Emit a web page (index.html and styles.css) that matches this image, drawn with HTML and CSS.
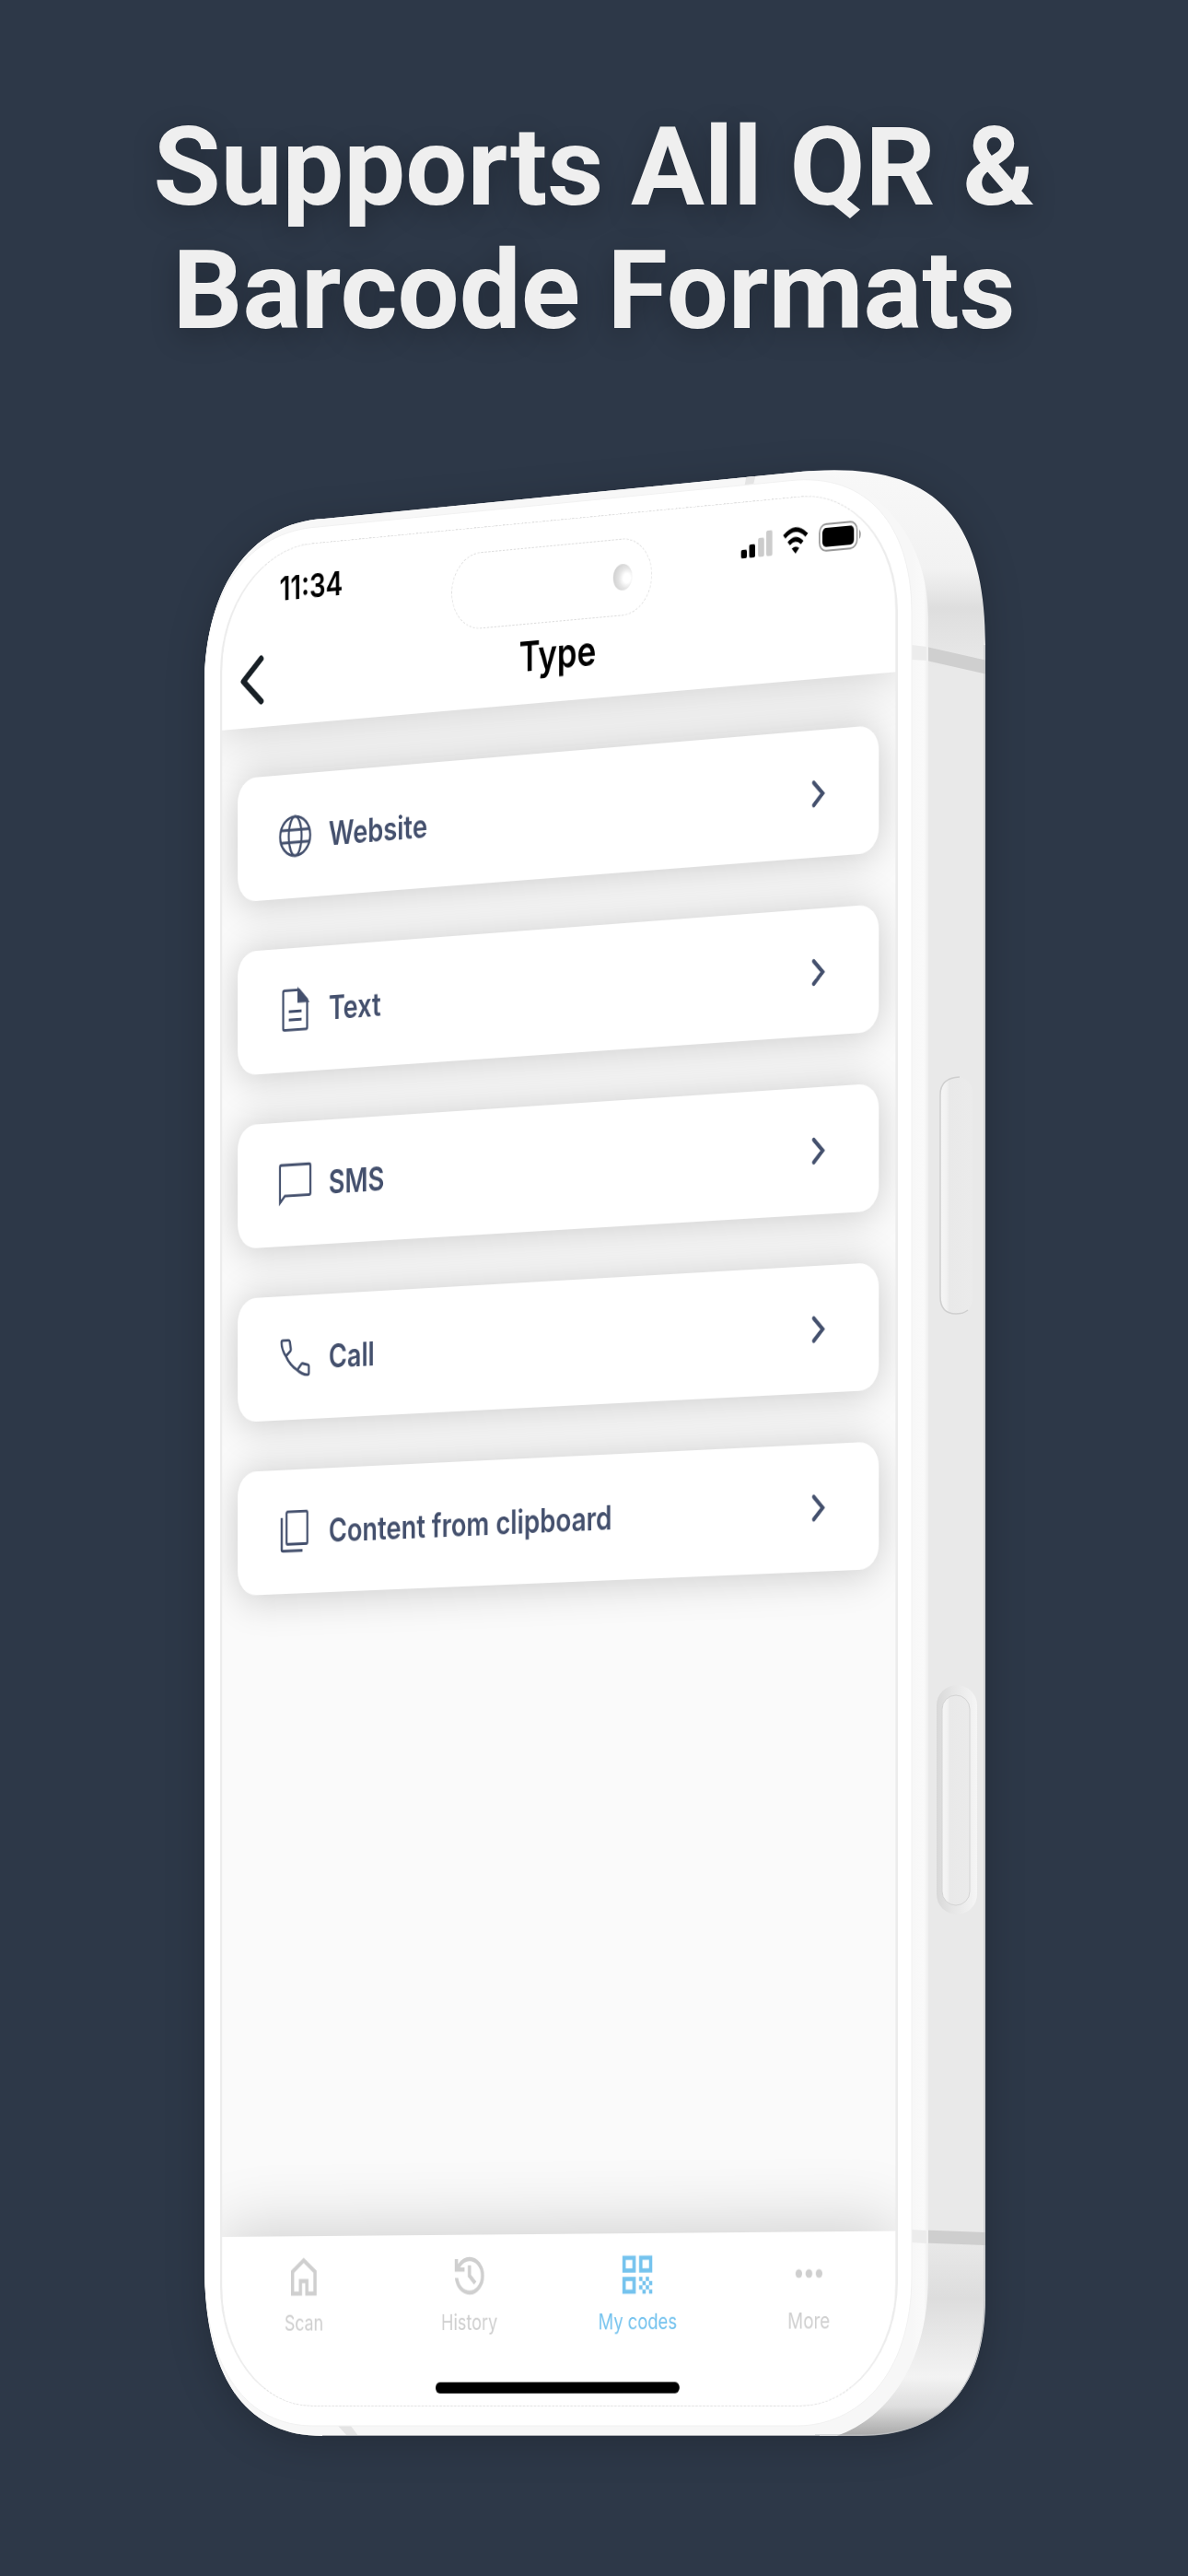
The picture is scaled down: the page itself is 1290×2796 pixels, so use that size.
FILE: index.html
```
<!DOCTYPE html>
<html lang="en">
<head>
    <meta charset="UTF-8">
    <meta name="viewport" content="width=device-width, initial-scale=1.0">
    <title>Supports All QR &amp; Barcode Formats</title>
    <link rel="stylesheet" href="styles.css">
</head>
<body>
    <h1 class="headline">Supports All QR &amp;<br>Barcode Formats</h1>

    <main class="phone">
        <!-- Phone body -->
        <svg class="shell" viewBox="219 510 852 2138" aria-hidden="true">
            <defs>
                <linearGradient id="side" gradientUnits="userSpaceOnUse" x1="0" y1="511" x2="0" y2="2644">
                    <stop offset="0" stop-color="#f8f8f8"/>
                    <stop offset="0.05" stop-color="#f2f2f2"/>
                    <stop offset="0.07" stop-color="#dedede"/>
                    <stop offset="0.1" stop-color="#e9e9e9"/>
                    <stop offset="0.9" stop-color="#e9e9e9"/>
                    <stop offset="0.93" stop-color="#dddddd"/>
                    <stop offset="0.97" stop-color="#f3f3f3"/>
                    <stop offset="0.985" stop-color="#dedede"/>
                    <stop offset="1" stop-color="#a8a8a8"/>
                </linearGradient>
                <linearGradient id="edge" gradientUnits="userSpaceOnUse" x1="990" y1="0" x2="1009" y2="0">
                    <stop offset="0" stop-color="#f7f7f7"/>
                    <stop offset="0.7" stop-color="#fafafa"/>
                    <stop offset="1" stop-color="#ececec"/>
                </linearGradient>
                <linearGradient id="bevel" x1="0" y1="0" x2="1" y2="0">
                    <stop offset="0" stop-color="#d8d8d8"/>
                    <stop offset="0.4" stop-color="#e6e6e6"/>
                    <stop offset="1" stop-color="#f5f5f5"/>
                </linearGradient>
                <linearGradient id="key" x1="0" y1="0" x2="1" y2="0">
                    <stop offset="0" stop-color="#f6f6f6"/>
                    <stop offset="0.2" stop-color="#f1f1f1"/>
                    <stop offset="0.28" stop-color="#e9e9e9"/>
                    <stop offset="1" stop-color="#ebebeb"/>
                </linearGradient>
                <clipPath id="body">
                    <path d="M222 745C222 640 270 567 352 563L860 513C1000 498 1070 545 1070 700V2495C1070 2600 1015 2644 935 2644H350C270 2644 222 2585 222 2460Z"/>
                </clipPath>
            </defs>
            <g clip-path="url(#body)">
                <rect x="220" y="505" width="852" height="2143" fill="url(#side)"/>
                <path d="M990 700L1006 702L1072 717V732L1006 717L990 716Z" fill="#cfcfcf"/>
                <path d="M990 2420L1072 2423V2437L990 2434Z" fill="#cecece"/>
                <path d="M222 745C222 640 270 560 352 555L850 508C960 512 1008 590 1008 670V2470C1008 2580 950 2640 885 2650H350C270 2650 222 2585 222 2460Z" fill="url(#edge)"/>
                <path d="M990 700L1006 702V717L990 716ZM990 2420L1006 2421V2435L990 2434Z" fill="#ececec"/>
                <path d="M811 514H821L817 530H808ZM367 2633H381L389 2644H377Z" fill="#e4e4e4"/>
                <path d="M222 745C222 640 270 577 345 572L865 521C950 516 990 580 990 665V2470C990 2580 930 2633 865 2633H340C270 2633 222 2575 222 2460Z" fill="#fff" stroke="#f1f1f1"/>
                <path d="M885 2643H935C1015 2643 1069 2600 1069 2495V700" fill="none" stroke="#b9bcc0" stroke-width="1"/>
                <path d="M350 2644H890" stroke="#aeb1b5" stroke-width="2"/>
            </g>
            <rect x="1021" y="1169" width="35" height="257" rx="16" fill="url(#key)"/>
            <path d="M1042 1169Q1021 1170 1021 1188V1407Q1021 1426 1038 1426Q1046 1426 1051 1422" fill="none" stroke="#cfcfcf" stroke-width="1.5"/>
            <rect x="1017" y="1829" width="44" height="249" rx="22" fill="url(#bevel)"/>
            <rect x="1023" y="1840" width="30" height="228" rx="15" fill="url(#key)" stroke="#d4d4d4"/>
        </svg>

        <!-- App screen, turned towards the left -->
        <div class="screen">
            <div class="island"><span class="camera"></span></div>
            <header class="top">
                <div class="status">
                    <span class="time">11:34</span>
                    <svg class="signal" viewBox="0 0 42 28" aria-hidden="true">
                        <rect x="0" y="19" width="8" height="9" rx="2"/>
                        <rect x="11" y="14" width="8" height="14" rx="2"/>
                        <rect x="23" y="8" width="8" height="20" rx="2" fill="#ccc"/>
                        <rect x="34" y="1" width="8" height="27" rx="2" fill="#ccc"/>
                    </svg>
                    <svg class="wifi" viewBox="0 0 34 28" aria-hidden="true">
                        <path d="M2 9.5Q17-4 32 9.5M8 17Q17 9 26 17" fill="none" stroke="#000" stroke-width="5"/>
                        <path d="M12 22.5Q17 19 22 22.5L17 28Z"/>
                    </svg>
                    <svg class="battery" viewBox="0 0 58 30" aria-hidden="true">
                        <rect x="1" y="1" width="50" height="28" rx="9" fill="none" stroke="#999" stroke-width="2"/>
                        <rect x="5" y="5" width="42" height="20" rx="5"/>
                        <path d="M54 10Q58 15 54 20Z" fill="#999"/>
                    </svg>
                </div>
                <div class="navbar">
                    <button class="back" type="button" aria-label="Back">
                        <svg viewBox="0 0 36 56" aria-hidden="true"><path d="M31 5L6 28L31 51"/></svg>
                    </button>
                    <h2 class="title">Type</h2>
                </div>
            </header>

            <div class="types">
                <button class="type" type="button">
                    <svg class="icon" viewBox="0 0 24 24" aria-hidden="true">
                        <circle cx="12" cy="12" r="9.4"/><ellipse cx="12" cy="12" rx="4" ry="9.4"/>
                        <path d="M3.3 9H20.7M3.3 15H20.7"/>
                    </svg>
                    <span class="label">Website</span>
                    <svg class="chevron" viewBox="0 0 24 24" aria-hidden="true"><path d="M9.5 6.7L14.8 12L9.5 17.3"/></svg>
                </button>
                <button class="type" type="button">
                    <svg class="icon" viewBox="0 0 24 24" aria-hidden="true">
                        <path d="M5.3 2.5H14.5L19.5 7.5V20.7Q19.5 21.5 18.7 21.5H5.3Q4.5 21.5 4.5 20.7V3.3Q4.5 2.5 5.3 2.5ZM8 12.7H16M8 16.7H16"/>
                        <path d="M14 2.5V8H19.5Z" fill="currentColor"/>
                    </svg>
                    <span class="label">Text</span>
                    <svg class="chevron" viewBox="0 0 24 24" aria-hidden="true"><path d="M9.5 6.7L14.8 12L9.5 17.3"/></svg>
                </button>
                <button class="type" type="button">
                    <svg class="icon" viewBox="0 0 24 24" aria-hidden="true">
                        <path d="M2.5 20.8V3.7Q2.5 2.8 3.4 2.8H20.6Q21.5 2.8 21.5 3.7V16.8Q21.5 17.6 20.6 17.6H5.6Z"/>
                    </svg>
                    <span class="label">SMS</span>
                    <svg class="chevron" viewBox="0 0 24 24" aria-hidden="true"><path d="M9.5 6.7L14.8 12L9.5 17.3"/></svg>
                </button>
                <button class="type" type="button">
                    <svg class="icon" viewBox="0 0 24 24" aria-hidden="true">
                        <path d="M4.3 3.5H7.9Q8.5 3.5 8.6 4.1L9.3 7.8Q9.4 8.3 9 8.7L6.2 11.1Q3.5 7.8 3.5 4.3Q3.5 3.5 4.3 3.5ZM6.2 11.1Q8.8 15.6 13.3 18M13.3 18L15.8 15.3Q16.2 14.9 16.7 15L19.9 15.7Q20.5 15.8 20.5 16.4V19.7Q20.5 20.5 19.7 20.5Q16.3 20.4 13.3 18Z"/>
                    </svg>
                    <span class="label">Call</span>
                    <svg class="chevron" viewBox="0 0 24 24" aria-hidden="true"><path d="M9.5 6.7L14.8 12L9.5 17.3"/></svg>
                </button>
                <button class="type" type="button">
                    <svg class="icon" viewBox="0 0 24 24" aria-hidden="true">
                        <rect x="6.6" y="2.4" width="13" height="15.6" rx="0.8"/>
                        <path d="M3.6 5.2V20.4Q3.6 21.2 4.4 21.2H16.6"/>
                    </svg>
                    <span class="label">Content from clipboard</span>
                    <svg class="chevron" viewBox="0 0 24 24" aria-hidden="true"><path d="M9.5 6.7L14.8 12L9.5 17.3"/></svg>
                </button>
            </div>

            <nav class="tabs">
                <a class="tab" href="#">
                    <svg viewBox="0 0 24 24" aria-hidden="true"><path d="M6 19h3v-6h6v6h3v-9l-6-4.7L6 10v9zm-2 2V9l8-6.2L20 9v12h-7v-6h-2v6H4z"/></svg>
                    Scan
                </a>
                <a class="tab" href="#">
                    <svg viewBox="0 0 24 24" aria-hidden="true"><path d="M12 21q-3.45 0-6.0125-2.2875T3.05 13H5.1q.35 2.6 2.3125 4.3T12 19q2.925 0 4.9625-2.0375T19 12t-2.0375-4.9625T12 5q-1.725 0-3.225.8T6.25 8H9v2H3V4h2v2.35q1.275-1.6 3.1125-2.475T12 3q1.875 0 3.5125.7125t2.85 1.925 1.925 2.85T21 12t-.7125 3.5125-1.925 2.85-2.85 1.925T12 21Zm2.8-4.8L11 12.4V7h2v4.6l3.2 3.2-1.4 1.4Z"/></svg>
                    History
                </a>
                <a class="tab active" href="#">
                    <svg viewBox="0 0 24 24" aria-hidden="true"><path fill-rule="evenodd" d="M3 3h8v8H3zM5 5v4h4V5zM13 3h8v8h-8zM15 5v4h4V5zM3 13h8v8H3zM5 15v4h4v-4z"/><path d="M13 13h2v2h-2zM17 13h2v2h-2zM15 15h2v2h-2zM19 15h2v2h-2zM13 17h2v2h-2zM17 17h2v2h-2zM15 19h2v2h-2zM19 19h2v2h-2z"/></svg>
                    My codes
                </a>
                <a class="tab" href="#">
                    <svg viewBox="0 0 24 24" aria-hidden="true"><circle cx="6" cy="12" r="2"/><circle cx="12" cy="12" r="2"/><circle cx="18" cy="12" r="2"/></svg>
                    More
                </a>
            </nav>
            <div class="home-bar"></div>
        </div>
    </main>
</body>
</html>
```
FILE: styles.css
```
* {
    margin: 0;
    padding: 0;
    box-sizing: border-box;
}
:root {
    --page-bg: #2d3848;
    --ink: #44506d;
    --muted: #cfcfcf;
    --active: #75c3ee;
}
body {
    font-family: Inter, "Liberation Sans", sans-serif;
    background: var(--page-bg);
    display: flex;
    flex-direction: column;
    align-items: center;
    gap: 127px;
    padding: 115px 0 148px;
    min-height: 100vh;
    overflow-x: hidden;
}
.headline {
    font-family: Roboto, Arial, sans-serif;
    font-size: 119px;
    font-weight: 700;
    line-height: 134px;
    color: #efefef;
    text-align: center;
    text-shadow: 0 8px 30px rgba(0, 0, 0, 0.25);
}
.phone {
    position: relative;
    width: 852px;
}
.shell {
    display: block;
    width: 100%;
    filter: drop-shadow(0 8px 20px rgba(0, 0, 0, 0.2));
}
.screen {
    position: absolute;
    left: 20px;
    bottom: 36px;
    width: 928px;
    height: 2013px;
    display: flex;
    flex-direction: column;
    background: #fafafa;
    border: 1px dashed #e2e2e2;
    border-left: 3px solid #ececec;
    border-right: 3px solid #ececec;
    border-radius: 130px;
    overflow: hidden;
    transform-origin: left bottom;
    transform: perspective(17600px) rotateY(-40deg);
}

/* Status bar and title */
.top {
    background: #fff;
    box-shadow: 0 0 60px rgba(0, 0, 0, 0.2);
}
.status {
    display: flex;
    align-items: center;
    gap: 14px;
    height: 90px;
    padding: 0 44px 0 81px;
}
.time {
    flex: 1;
    font-size: 36px;
    font-weight: 600;
}
.signal {
    width: 42px;
    height: 28px;
}
.wifi {
    width: 34px;
    height: 28px;
}
.battery {
    width: 58px;
    height: 30px;
}
.island {
    position: absolute;
    top: 26px;
    left: 321px;
    width: 275px;
    height: 82px;
    border: 1px dashed #dcdcdc;
    border-radius: 41px;
    display: flex;
    align-items: center;
    justify-content: flex-end;
    padding-right: 26px;
}
.camera {
    width: 26px;
    height: 28px;
    border-radius: 50%;
    background: radial-gradient(circle at 72% 55%, #fff 0 20%, #e4e4e4 45%, #c8c8c8 90%);
}
.navbar {
    display: grid;
    grid-template-columns: 60px 1fr 60px;
    align-items: center;
    height: 103px;
    padding-left: 12px;
}
.back {
    border: none;
    background: none;
    padding-left: 12px;
    cursor: pointer;
}
.back svg {
    display: block;
    width: 36px;
    height: 56px;
    fill: none;
    stroke: #182026;
    stroke-width: 7;
    stroke-linecap: round;
    stroke-linejoin: round;
}
.title {
    font-size: 44px;
    font-weight: 600;
    text-align: center;
}

/* Code types */
.types {
    flex: 1;
    display: flex;
    flex-direction: column;
    gap: 54px;
    padding: 54px 22px;
}
.type {
    display: flex;
    align-items: center;
    gap: 20px;
    height: 134px;
    padding: 0 54px;
    border: none;
    border-radius: 26px;
    background: #fff;
    box-shadow: 0 2px 46px rgba(0, 0, 0, 0.2);
    color: var(--ink);
    font-family: inherit;
    font-size: 35px;
    font-weight: 600;
    text-align: left;
    cursor: pointer;
}
.icon,
.chevron {
    width: 54px;
    height: 54px;
    fill: none;
    stroke: currentColor;
    stroke-width: 1.3;
}
.chevron {
    stroke-width: 2;
    stroke-linecap: round;
}
.label {
    flex: 1;
}

/* Bottom tabs */
.tabs {
    position: relative;
    display: flex;
    height: 183px;
    padding-top: 17px;
    background: #fff;
    box-shadow: 0 0 80px rgba(0, 0, 0, 0.2);
}
.tab {
    flex: 1;
    display: flex;
    flex-direction: column;
    align-items: center;
    gap: 9px;
    font-size: 23px;
    line-height: 28px;
    color: var(--muted);
    text-decoration: none;
}
.tab svg {
    width: 54px;
    height: 54px;
    fill: currentColor;
}
.tab.active {
    color: var(--active);
}
.home-bar {
    position: absolute;
    left: 50%;
    bottom: 13px;
    width: 334px;
    height: 12px;
    margin-left: -162px;
    border-radius: 6px;
    background: #000;
}
```
